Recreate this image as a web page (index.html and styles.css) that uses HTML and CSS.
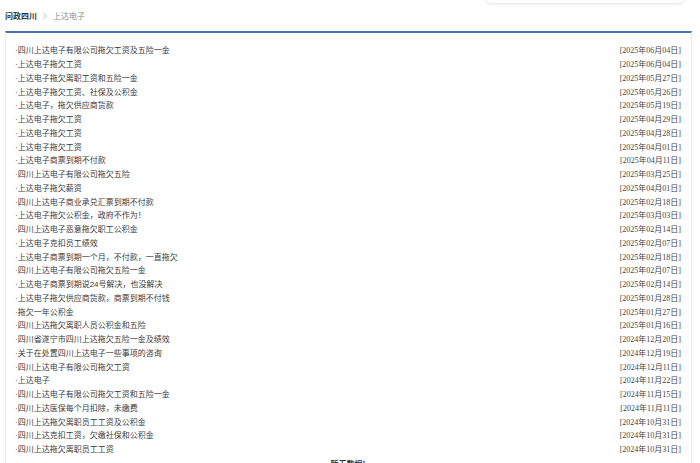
FILE: index.html
```html
<!DOCTYPE html>
<html lang="zh">
<head>
<meta charset="utf-8">
<title>上达电子</title>
<link rel="stylesheet" href="styles.css">
</head>
<body>
<div class="search-shell"></div>
<nav class="crumbs">
  <a class="crumb-home">问政四川</a>
  <svg class="crumb-sep" width="6" height="8" viewBox="0 0 6 8"><path d="M1.5 1 L4.5 4 L1.5 7" fill="none" stroke="#b5b5b5" stroke-width="0.9"/></svg>
  <span class="crumb-cur">上达电子</span>
</nav>
<section class="panel">
  <ul class="list">
    <li class="row"><span class="title">·四川上达电子有限公司拖欠工资及五险一金</span><span class="date">[2025年06月04日]</span></li>
    <li class="row"><span class="title">·上达电子拖欠工资</span><span class="date">[2025年06月04日]</span></li>
    <li class="row"><span class="title">·上达电子拖欠离职工资和五险一金</span><span class="date">[2025年05月27日]</span></li>
    <li class="row"><span class="title">·上达电子拖欠工资、社保及公积金</span><span class="date">[2025年05月26日]</span></li>
    <li class="row"><span class="title">·上达电子，拖欠供应商货款</span><span class="date">[2025年05月19日]</span></li>
    <li class="row"><span class="title">·上达电子拖欠工资</span><span class="date">[2025年04月29日]</span></li>
    <li class="row"><span class="title">·上达电子拖欠工资</span><span class="date">[2025年04月28日]</span></li>
    <li class="row"><span class="title">·上达电子拖欠工资</span><span class="date">[2025年04月01日]</span></li>
    <li class="row"><span class="title">·上达电子商票到期不付款</span><span class="date">[2025年04月11日]</span></li>
    <li class="row"><span class="title">·四川上达电子有限公司拖欠五险</span><span class="date">[2025年03月25日]</span></li>
    <li class="row"><span class="title">·上达电子拖欠薪资</span><span class="date">[2025年04月01日]</span></li>
    <li class="row"><span class="title">·四川上达电子商业承兑汇票到期不付款</span><span class="date">[2025年02月18日]</span></li>
    <li class="row"><span class="title">·上达电子拖欠公积金，政府不作为！</span><span class="date">[2025年03月03日]</span></li>
    <li class="row"><span class="title">·四川上达电子恶意拖欠职工公积金</span><span class="date">[2025年02月14日]</span></li>
    <li class="row"><span class="title">·上达电子克扣员工绩效</span><span class="date">[2025年02月07日]</span></li>
    <li class="row"><span class="title">·上达电子商票到期一个月，不付款，一直拖欠</span><span class="date">[2025年02月18日]</span></li>
    <li class="row"><span class="title">·四川上达电子有限公司拖欠五险一金</span><span class="date">[2025年02月07日]</span></li>
    <li class="row"><span class="title">·上达电子商票到期说24号解决，也没解决</span><span class="date">[2025年02月14日]</span></li>
    <li class="row"><span class="title">·上达电子拖欠供应商货款，商票到期不付钱</span><span class="date">[2025年01月28日]</span></li>
    <li class="row"><span class="title">·拖欠一年公积金</span><span class="date">[2025年01月27日]</span></li>
    <li class="row"><span class="title">·四川上达拖欠离职人员公积金和五险</span><span class="date">[2025年01月16日]</span></li>
    <li class="row"><span class="title">·四川省遂宁市四川上达拖欠五险一金及绩效</span><span class="date">[2024年12月20日]</span></li>
    <li class="row"><span class="title">·关于在处置四川上达电子一些事项的咨询</span><span class="date">[2024年12月19日]</span></li>
    <li class="row"><span class="title">·四川上达电子有限公司拖欠工资</span><span class="date">[2024年12月11日]</span></li>
    <li class="row"><span class="title">·上达电子</span><span class="date">[2024年11月22日]</span></li>
    <li class="row"><span class="title">·四川上达电子有限公司拖欠工资和五险一金</span><span class="date">[2024年11月15日]</span></li>
    <li class="row"><span class="title">·四川上达医保每个月扣除，未缴费</span><span class="date">[2024年11月11日]</span></li>
    <li class="row"><span class="title">·四川上达拖欠离职员工工资及公积金</span><span class="date">[2024年10月31日]</span></li>
    <li class="row"><span class="title">·四川上达克扣工资，欠缴社保和公积金</span><span class="date">[2024年10月31日]</span></li>
    <li class="row"><span class="title">·四川上达拖欠离职员工工资</span><span class="date">[2024年10月31日]</span></li>
  </ul>
  <p class="empty">暂无数据!</p>
</section>
</body>
</html>
```
FILE: styles.css
```css
html, body {
  margin: 0;
  padding: 0;
  background: #ffffff;
}
body {
  font-family: "Noto Sans CJK SC", "Noto Sans", sans-serif;
  color: #333333;
  position: relative;
  overflow: hidden;
}
.search-shell {
  position: absolute;
  left: 485px;
  top: -10px;
  width: 200px;
  height: 13px;
  background: #ffffff;
  border-radius: 6px;
  box-shadow: 0 1px 3px rgba(0, 0, 0, 0.12);
}
.crumbs {
  display: flex;
  align-items: center;
  height: 31px;
  padding-left: 5px;
  font-size: 8px;
  line-height: 10px;
  box-sizing: border-box;
}
.crumb-home {
  font-weight: bold;
  color: #333333;
}
.crumb-sep {
  margin: 0 5px 0 5px;
}
.crumb-cur {
  color: #8a8a8a;
}
.panel {
  margin: 0 8px 0 5px;
  border-top: 2px solid #4a70b4;
  border-left: 1px solid #ececec;
  border-right: 1px solid #ececec;
  padding: 10px 10px 0 9px;
}
.list {
  list-style: none;
  margin: 0;
  padding: 0;
}
.row {
  display: flex;
  justify-content: space-between;
  align-items: center;
  height: 13.75px;
  font-size: 8px;
}
.title {
  font-family: "Liberation Sans", "Noto Sans CJK SC", sans-serif;
  color: #3a3a3a;
}
.date {
  font-family: "Liberation Serif", "Noto Sans CJK SC", serif;
  color: #444444;
  font-size: 8px;
}
.empty {
  margin: 2px 0 0 0;
  text-align: center;
  font-size: 8px;
  font-weight: bold;
  color: #333333;
  line-height: 12px;
}
```
